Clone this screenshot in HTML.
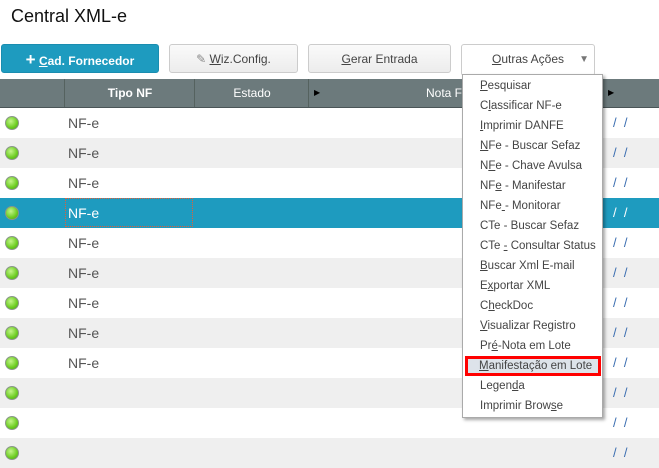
<!DOCTYPE html><html><head><style>
body{margin:0;width:659px;height:456px;overflow:hidden;background:#fff;font-family:"Liberation Sans",sans-serif;position:relative}
h1{position:absolute;left:11px;top:6px;margin:0;font-weight:normal;font-size:18px;color:#111}
.btn{position:absolute;top:44px;height:29px;border:1px solid #ccc;border-radius:3px;background:linear-gradient(#fafafa,#ececec);font-size:12px;color:#444;text-align:center;line-height:29px;box-sizing:border-box}
.hd{position:absolute;top:79px;height:28px;left:0;width:659px;background:#6c7a7c;border-bottom:1px solid #4a5557}
.hd div{position:absolute;top:0;height:28px;border-left:1px solid #55625f;color:#fff;font-size:12px;line-height:28px;text-align:center}
.row{position:absolute;left:0;width:659px;height:30px;font-size:14px;color:#555}
.dot{position:absolute;left:5px;top:8px;width:14px;height:14px;border-radius:50%;background:radial-gradient(circle at 40% 35%,#c4f58a,#6ccc22 60%,#48a014);border:1px solid #8a968a;box-sizing:border-box}
.nf{position:absolute;left:68px;top:7px}
.sl{position:absolute;left:613px;top:7px;font-size:13px;color:#3a6db0;white-space:pre}
.menu{position:absolute;left:462px;top:74px;width:139px;height:341px;background:#fff;border:1px solid #aaa;box-shadow:2px 2px 3px rgba(0,0,0,.35);font-size:11.5px;color:#444}
.menu div{height:20px;line-height:20px;padding-left:17px;white-space:nowrap}
</style></head><body>
<h1>Central XML-e</h1>
<div class="btn" style="left:1px;width:158px;background:#1e9bbf;border-color:#1a8db0;color:#fff;font-weight:bold"><span style="font-size:17px">+</span> <u>C</u>ad. Fornecedor</div>
<div class="btn" style="left:169px;width:129px"><span style="color:#888">&#9998;</span> <u>W</u>iz.Config.</div>
<div class="btn" style="left:308px;width:143px"><u>G</u>erar Entrada</div>
<div class="btn" style="left:461px;width:134px;height:32px;background:#fff"><u>O</u>utras Ações<span style="position:absolute;right:5px;top:0;font-size:10px;color:#777">&#9660;</span></div>
<div class="hd">
<div style="left:64px;width:130px;font-weight:bold">Tipo NF</div>
<div style="left:194px;width:114px">Estado</div>
<div style="left:308px;width:294px">Nota Fiscal<span style="position:absolute;left:5px;font-size:8px;color:#000">&#9654;</span></div>
<div style="left:602px;width:57px"><span style="position:absolute;left:5px;font-size:8px;color:#000">&#9654;</span></div>
</div>
<div class="row" style="top:108px"><div class="dot"></div><div class="nf">NF-e</div><div class="sl">/  /</div></div>
<div class="row" style="top:138px;background:#efefef"><div class="dot"></div><div class="nf">NF-e</div><div class="sl">/  /</div></div>
<div class="row" style="top:168px"><div class="dot"></div><div class="nf">NF-e</div><div class="sl">/  /</div></div>
<div class="row" style="top:198px;background:#1e9bbf;color:#fff"><div class="dot"></div><div style="position:absolute;left:65px;top:0;width:128px;height:29px;border:1px dotted #e0603a;box-sizing:border-box"></div><div class="nf">NF-e</div><div class="sl" style="color:#fff">/  /</div></div>
<div class="row" style="top:228px"><div class="dot"></div><div class="nf">NF-e</div><div class="sl">/  /</div></div>
<div class="row" style="top:258px;background:#efefef"><div class="dot"></div><div class="nf">NF-e</div><div class="sl">/  /</div></div>
<div class="row" style="top:288px"><div class="dot"></div><div class="nf">NF-e</div><div class="sl">/  /</div></div>
<div class="row" style="top:318px;background:#efefef"><div class="dot"></div><div class="nf">NF-e</div><div class="sl">/  /</div></div>
<div class="row" style="top:348px"><div class="dot"></div><div class="nf">NF-e</div><div class="sl">/  /</div></div>
<div class="row" style="top:378px;background:#efefef"><div class="dot"></div><div class="sl">/  /</div></div>
<div class="row" style="top:408px"><div class="dot"></div><div class="sl">/  /</div></div>
<div class="row" style="top:438px;background:#efefef"><div class="dot"></div><div class="sl">/  /</div></div>
<div class="menu" style="padding-top:1px">
<div><u>P</u>esquisar</div><div>C<u>l</u>assificar NF-e</div><div><u>I</u>mprimir DANFE</div><div><u>N</u>Fe - Buscar Sefaz</div><div>N<u>F</u>e - Chave Avulsa</div><div>NF<u>e</u> - Manifestar</div><div>NFe<u> </u>- Monitorar</div><div>CTe - Buscar Sefaz</div><div>CTe <u>-</u> Consultar Status</div><div><u>B</u>uscar Xml E-mail</div><div>E<u>x</u>portar XML</div><div>C<u>h</u>eckDoc</div><div><u>V</u>isualizar Registro</div><div>Pr<u>é</u>-Nota em Lote</div><div style="background:#dde3ea;outline:3px solid #f00;outline-offset:-3px;margin:0 1px 0 2px;padding-left:14px"><u>M</u>anifestação em Lote</div><div>Legen<u>d</u>a</div><div>Imprimir Brow<u>s</u>e</div>
</div>
</body></html>
